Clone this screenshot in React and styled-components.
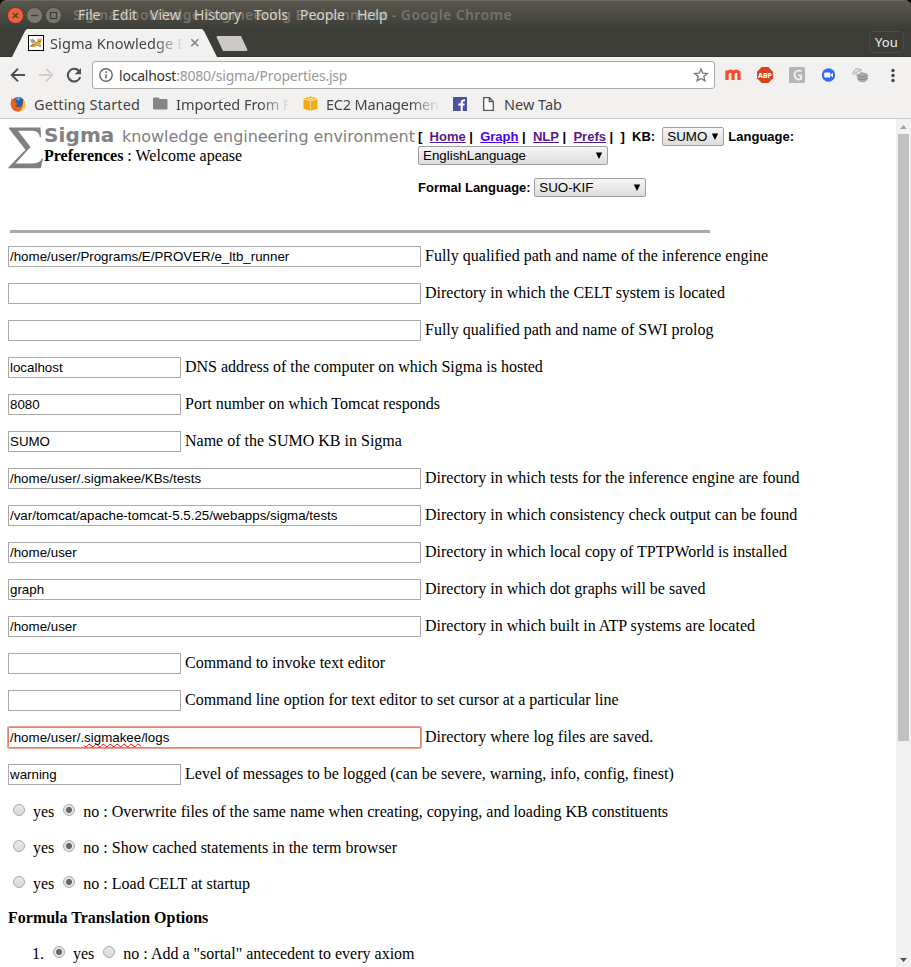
import React from "react";
import styled, { createGlobalStyle, css } from "styled-components";

const Global = createGlobalStyle`
  * { box-sizing: border-box; }
  html, body { margin: 0; background: #fff; overflow: hidden; }
  svg { display: block; flex: none; }
`;

const ui = css`font-family: "Noto Sans", "Open Sans", sans-serif;`;

const Window = styled.div`
  width: 911px; height: 967px; display: flex; flex-direction: column;
  background: #fff; overflow: hidden;
`;

/* ---------- window frame ---------- */
const Frame = styled.header`
  ${ui} flex: none; height: 57px; background: #000; 
`;
const FrameFill = styled.div`
  height: 57px; border-radius: 6px 6px 0 0; border-top: 1px solid #6b685f;
  background: linear-gradient(#5a574e 0, #3e3e39 27px, #3d3d38 100%);
  box-shadow: inset 0 -1px #33332f;
`;
const TitleBar = styled.div`
  height: 28px; display: flex; align-items: center; padding-left: 7px;
`;
const WindowButtons = styled.div`
  display: flex; gap: 2px; width: 66px; flex: none;
`;
const TitleLayers = styled.div`
  position: relative; flex: 1; height: 28px;
`;
const Title = styled.div`
  position: absolute; left: 0; top: 0; line-height: 27px; white-space: pre;
  font-size: 14px; font-weight: 600; color: #75736b; letter-spacing: ${p => p.$ls}px;
`;
const MenuBar = styled.nav`
  position: absolute; left: 5px; top: 0; display: flex; line-height: 27px;
  font-size: 14px; color: #d5d2c8;
`;
const MenuItem = styled.span`
  width: ${p => p.$w}px; flex: none; white-space: pre;
`;
const TabStrip = styled.div`
  height: 28px; display: flex; padding-left: 12px; justify-content: space-between;
`;
const TabGroup = styled.div`display: flex;`;
const Tab = styled.div`
  width: 205px; height: 28px; padding: 0 0 0 16px; gap: 6px; background: #f2f1f0; display: flex; align-items: center;
  clip-path: polygon(0 100%, 13px 2px, 15px 0, 190px 0, 192px 2px, 100% 100%);
`;
const fade = css`
  overflow: hidden; white-space: pre;
  mask-image: linear-gradient(to right, #000 calc(100% - 30px), transparent);
`;
const TabTitle = styled.span`
  width: 134px; font-size: 14.5px; line-height: 26px; color: #444; letter-spacing: ${p => p.$ls}px;
  ${fade}
`;
const NewTabButton = styled.div`
  width: 32px; height: 15px; margin: 7px 0 0 -1px; background: #ccc9c6; border-radius: 2px;
  clip-path: polygon(0 0, 25px 0, 100% 100%, 7px 100%);
`;
const Profile = styled.div`
  width: 35px; height: 22px; margin: 2px 7px 0 0; border: 1px solid #4d4c47; border-radius: 4px;
  color: #eee; font-size: 13px; line-height: 20px; text-align: center; letter-spacing: .2px;
`;

/* ---------- toolbar and bookmarks ---------- */
const Chrome = styled.div`
  ${ui} flex: none; height: 62px; background: #f2f1f0; border-bottom: 1px solid #c9c9c9;
`;
const Toolbar = styled.div`
  height: 36px; display: flex; align-items: center; padding: 0 0 0 10px;
`;
const NavButtons = styled.div`display: flex; gap: 12px; width: 82px; flex: none;`;
const AddressBar = styled.div`
  width: 623px; height: 28px; border: 1px solid #aaa; border-radius: 3px; background: #fff;
  display: flex; align-items: center; padding: 0 5px;
`;
const Url = styled.span`
  flex: 1; margin-left: 5px; font-size: 14px; line-height: 25px; color: #999; letter-spacing: ${p => p.$ls}px;
`;
const Host = styled.span`color: #333;`;
const Extensions = styled.div`
  flex: 1; display: flex; align-items: center; gap: 16px; padding-left: 10px;
`;
const MenuButton = styled.div`margin: 0 15px 0 auto;`;
const BookmarksBar = styled.div`
  height: 21px; display: flex; align-items: center; padding-left: 10px; 
`;
const Bookmark = styled.div`
  width: ${p => p.$w}px; flex: none; display: flex; align-items: center;
`;
const BookmarkLabel = styled.span`
  margin-left: ${p => p.$gap}px; width: ${p => p.$w}px; font-size: 14.5px; line-height: 22px; color: #444;
  letter-spacing: ${p => p.$ls}px; white-space: pre;
  ${p => p.$fade && fade}
`;

/* ---------- page ---------- */
const Viewport = styled.div`flex: 1; min-height: 0; display: flex;`;
const Page = styled.main`
  flex: 1; overflow: hidden; padding: 0 8px; color: #000;
  font-family: "Liberation Serif", "Times New Roman", serif; font-size: 16px; line-height: 18px;
`;
const PageHeader = styled.div`height: 111px; display: flex; padding-top: 8px;`;
const Brand = styled.div`display: flex; width: 410px; flex: none;`;
const BrandText = styled.div`white-space: nowrap;`;
const BrandName = styled.div`
  height: 20px; line-height: 16px; font-family: "DejaVu Sans", sans-serif; color: #808080;
  font-size: 16px; letter-spacing: -.05px;
`;
const BrandStrong = styled.b`
  display: inline-block; width: 78px; font-size: 20px; letter-spacing: .1px;
`;
const Controls = styled.div`
  font: bold 13px/19px "Liberation Sans", Arial, sans-serif;
`;
const ControlLine = styled.div`
  height: 19px; display: flex; align-items: center; white-space: pre; margin-bottom: ${p => p.$mb || 0}px;
`;
const Link = styled.a`color: ${p => p.$fresh ? "#40f" : "#551a8b"}; text-decoration: underline;`;
const SelectBox = styled.span`
  width: ${p => p.$w}px; height: 19px; margin: 0 4px 0 0; padding: 0 4px; border: 1px solid #a0a0a0; border-radius: 2px;
  background: linear-gradient(#f6f6f6, #dcdcdc);
  display: flex; align-items: center; justify-content: space-between;
  font: 13.333px/17px "Liberation Sans", Arial, sans-serif;
`;
const Rule = styled.div`width: 700px; height: 3px; margin: 0 0 13px 2px; background: #a9a9a9;`;
const Fields = styled.div`padding-bottom: 2px;`;
const Field = styled.div`height: 37px; display: flex; align-items: flex-start;`;
const Box = styled.div`
  width: ${p => p.$long ? 413 : 173}px; height: 21px; flex: none; padding: 0 1px;
  border: 1px solid #a9a9a9; font: 13.333px/20px "Liberation Sans", Arial, sans-serif; white-space: pre;
  ${p => p.$focus && css`border-color: #e3826a; border-radius: 1px; box-shadow: 0 0 0 1px #f0a08a;`}
`;
const Misspelled = styled.span`
  text-decoration: underline wavy #e00 1px; text-underline-offset: 1px; text-decoration-skip-ink: none;
`;
const FieldLabel = styled.span`margin-left: 4px; line-height: 20px; white-space: pre;`;
const Choice = styled.div`
  height: 36px; padding-left: ${p => p.$listed ? 24 : 5}px; display: flex; white-space: pre;
`;
const ListNumber = styled.span`width: 21px;`;
const Radio = styled.span`
  width: 12px; height: 12px; margin: ${p => p.$gap ? "1px 8px 0 9px" : "1px 8px 0 0"}; flex: none;
  border: 1px solid #aaa; border-radius: 50%;
  background: ${p => p.$on ? "radial-gradient(circle, #666 0 2.6px, #e2e2e2 3.4px)" : "linear-gradient(#e8e8e8, #dadada)"};
`;
const SectionTitle = styled.b`display: block; height: 34px; line-height: 14px;`;

const ScrollBar = styled.div`
  width: 15px; background: #f1f1f1; display: flex; flex-direction: column; align-items: center;
`;
const ScrollThumb = styled.div`width: 11px; height: 607px; background: #c1c1c1;`;
const ScrollEnd = styled.div`
  height: 15px; display: flex; align-items: center; justify-content: center; ${p => p.$last && "margin-top: auto;"}
`;

/* ---------- drawings ---------- */
const WinButton = ({ kind }) => (
  <svg width="17" height="17" viewBox="0 0 17 17">
    <circle cx="8.5" cy="8.5" r="8" fill={kind === "close" ? "#ee6237" : "#7b7870"} stroke="#3b3a34" strokeWidth=".7" />
    <g fill="none" stroke="#3b3a34" strokeWidth="1.2">
      {kind === "close" && <path d="M5.8 5.8l5.4 5.4M11.2 5.8l-5.4 5.4" />}
      {kind === "min" && <path d="M5 8.5h7" />}
      {kind === "max" && <rect x="5.5" y="5.5" width="6" height="6" />}
    </g>
  </svg>
);
const TomcatIcon = () => (
  <svg width="16" height="16" viewBox="0 0 16 16">
    <rect x=".5" y=".5" width="15" height="15" fill="#fff" stroke="#000" />
    <path d="M2 4.5l3-.5 2 1.500-1 2-2 1z" fill="#9a9a90" />
    <path d="M9 6.500L10 3l1.200 1 1.800-.2L14 3l-.3 3-1.200 2 .7 3.500-3-1.500L7 12H4L2 11l3-2.500z" fill="#d9a648" />
    <path d="M2 11.500l4-2.200M10.500 6.500h2M6 6.500l2 1M9.500 10.500l3.500 1.200" stroke="#5a5040" strokeWidth=".7" fill="none" />
  </svg>
);
const CloseX = () => (
  <svg width="10" height="10" viewBox="0 0 10 10"><path d="M1.3 1.3l7 7M8.3 1.3l-7 7" stroke="#858585" strokeWidth="1.6" /></svg>
);
const Arrow = ({ back }) => (
  <svg width="16" height="16" viewBox="0 0 16 16">
    <path d={back ? "M15 8H2M8 1.6L1.7 8L8 14.4" : "M1 8h13M8 1.6L14.3 8L8 14.4"} fill="none" stroke={back ? "#505050" : "#d0cfce"} strokeWidth="2" />
  </svg>
);
const Reload = () => (
  <svg width="16" height="16" viewBox="0 0 16 16">
    <path d="M12.9 4A6.3 6.3 0 1 0 14.2 10" fill="none" stroke="#505050" strokeWidth="2" />
    <path d="M15 1v6.3H8.7z" fill="#505050" />
  </svg>
);
const InfoIcon = () => (
  <svg width="16" height="16" viewBox="0 0 16 16">
    <circle cx="8" cy="8" r="6.2" fill="none" stroke="#666" strokeWidth="1.4" />
    <path d="M8 7.2v4.3M8 4.3v1.6" stroke="#666" strokeWidth="1.5" />
  </svg>
);
const Star = () => (
  <svg width="16" height="16" viewBox="0 0 16 16">
    <path d="M8 2l1.7 4.2 4.6.3-3.5 2.9 1.1 4.4L8 11.4l-3.9 2.4 1.1-4.4-3.5-2.9 4.6-.3z" fill="none" stroke="#777" strokeWidth="1.3" />
  </svg>
);
const MIcon = () => (
  <svg width="16" height="16" viewBox="0 0 16 16">
    <path d="M2 13V3.5M2 6Q5.500 2.500 8 5.500V13M8 6Q11 2.700 13.900 5.400V13" fill="none" stroke="#fb4b2e" strokeWidth="3.3" />
  </svg>
);
const IconText = styled.text`font: bold 7.5px "Noto Sans", sans-serif;`;
const AbpIcon = () => (
  <svg width="16" height="16" viewBox="0 0 16 16">
    <path d="M4.7 0h6.6L16 4.7v6.6L11.3 16H4.7L0 11.3V4.7z" fill="#d8421b" />
    <IconText x="8" y="10.7" textAnchor="middle" textLength="14" lengthAdjust="spacingAndGlyphs" fill="#fff">ABP</IconText>
  </svg>
);
const GIcon = () => (
  <svg width="16" height="16" viewBox="0 0 16 16">
    <rect width="16" height="16" rx="1" fill="#b5b5b5" />
    <path d="M12.300 4.200Q8.500 2.800 6.300 5.200Q4.600 8.500 6.700 11.200Q9 13.300 12 12V8.500H9.300" fill="none" stroke="#f2f2f2" strokeWidth="1.8" />
  </svg>
);
const ZoomIcon = () => (
  <svg width="15" height="15" viewBox="0 0 15 15">
    <circle cx="7.5" cy="7" r="6.7" fill="#2f6cf6" />
    <rect x="3.2" y="4.6" width="6.2" height="5" rx="1" fill="#fff" />
    <path d="M9.8 6.5L12 4.9v4.4L9.800 7.800z" fill="#fff" />
  </svg>
);
const CloudDisk = () => (
  <svg width="17" height="16" viewBox="0 0 17 16">
    <path d="M1.5 8Q0 5 3 3.5Q5 .5 8 2.5L10 3M3.500 7l2.500-3h3M2 5l3 3" stroke="#bdbdbd" strokeWidth="1.3" fill="none" />
    <path d="M4.5 8L9.500 5l5.500 1.500 1 2-.5 4.500-3.500 2.500-5-1-1.500-2z" fill="#ababab" />
    <path d="M5.5 8.6l4.500 1.200 5.500-1.500M6 11.700l5 1 4.500-1.500" stroke="#808080" strokeWidth=".9" fill="none" />
  </svg>
);
const Kebab = () => (
  <svg width="6" height="16" viewBox="0 0 6 16">
    <g fill="#454545"><circle cx="3" cy="3.5" r="1.7" /><circle cx="3" cy="8.5" r="1.7" /><circle cx="3" cy="13.5" r="1.7" /></g>
  </svg>
);
const Firefox = () => (
  <svg width="16" height="16" viewBox="0 0 16 16">
    <circle cx="8" cy="8.3" r="7.2" fill="#e2481d" />
    <circle cx="8.6" cy="6" r="5" fill="#2363ad" />
    <path d="M5 2.500Q8 0 11 2L8.500 5z" fill="#4aa3df" />
    <path d="M.9 5l.9-2.800L3.500 4l2.800.6L5 6.500l2.500 1Q7 9.800 4.800 9.500 7 12.500 11 10.800 14 8 12.500 3.500 15.800 7 15 10.500 12.500 15.500 7.500 15.300 2 14.500.8 9z" fill="#e8641c" />
    <path d="M13 3.500q3.800 4 1.400 8.700-2 2.800-5 3.200 4.600-4 3.600-11.900z" fill="#fbc534" />
  </svg>
);
const Folder = () => (
  <svg width="15" height="13" viewBox="0 0 15 13"><path d="M1 .5h4.500l1.500 1.500h6.500q1 0 1 1V11.500q0 1-1 1H1q-1 0-1-1v-10q0-1 1-1z" fill="#858585" /></svg>
);
const Cube = () => (
  <svg width="15" height="15" viewBox="0 0 15 15">
    <path d="M.5 3.300L7.200 5.300v9.500L.5 12.800zM14.500 3.300L7.800 5.300v9.500l6.700-2z" fill="#f5ab14" />
    <path d="M.7 2.500L7.500.3l6.800 2.200L7.500 4.700z" fill="#fbb726" /><path d="M4.500 3.800l6-2.300M10.500 3.800l-6-2.300" stroke="#fce0a0" strokeWidth=".8" />
  </svg>
);
const Facebook = () => (
  <svg width="14" height="14" viewBox="0 0 14 14">
    <rect width="14" height="14" rx=".6" fill="#4752a0" />
    <path d="M8.700 14V5.300Q8.700 3.300 12 3.300M5.300 7.500h6.300" stroke="#fff" strokeWidth="2.1" fill="none" />
  </svg>
);
const PageIcon = () => (
  <svg width="11" height="14" viewBox="0 0 11 14"><path d="M.7.7h5.800l3.800 3.800v8.800H.7zM6.300.7v4h4" fill="#fff" stroke="#555" strokeWidth="1.3" /></svg>
);
const SigmaLogo = () => (
  <svg width="36" height="42" viewBox="0 0 36 42">
    <path d="M1 .5H32.500L33 10H31.800Q31 4 25 3.800H10L22.500 20L7.500 36.500H24Q32 36.500 33.800 31.500H35L32.800 41.300H.5V40.200L17.500 22.800L1 1.800z" fill="#808080" />
  </svg>
);
const Caret = () => (
  <svg width="8" height="8" viewBox="0 0 8 8"><path d="M.8 .5h6.400L4 7z" fill="#000" /></svg>
);
const ScrollArrow = ({ down }) => (
  <svg width="7" height="4" viewBox="0 0 7 4"><path d={down ? "M0 0h7L3.500 4z" : "M0 4h7L3.500 0z"} fill={down ? "#505050" : "#a3a3a3"} /></svg>
);

const Select = ({ w, children }) => <SelectBox $w={w}>{children}<Caret /></SelectBox>;

const menus = [["File", 34], ["Edit", 38], ["View", 44], ["History", 60], ["Tools", 46], ["People", 57], ["Help", 40]];
const fields = [
  ["/home/user/Programs/E/PROVER/e_ltb_runner", "Fully qualified path and name of the inference engine", true],
  ["", "Directory in which the CELT system is located", true],
  ["", "Fully qualified path and name of SWI prolog", true],
  ["localhost", "DNS address of the computer on which Sigma is hosted"],
  ["8080", "Port number on which Tomcat responds"],
  ["SUMO", "Name of the SUMO KB in Sigma"],
  ["/home/user/.sigmakee/KBs/tests", "Directory in which tests for the inference engine are found", true],
  ["/var/tomcat/apache-tomcat-5.5.25/webapps/sigma/tests", "Directory in which consistency check output can be found", true],
  ["/home/user", "Directory in which local copy of TPTPWorld is installed", true],
  ["graph", "Directory in which dot graphs will be saved", true],
  ["/home/user", "Directory in which built in ATP systems are located", true],
  ["", "Command to invoke text editor"],
  ["", "Command line option for text editor to set cursor at a particular line"],
  [<>/home/user/.<Misspelled>sigmakee</Misspelled>/logs</>, "Directory where log files are saved.", true, true],
  ["warning", "Level of messages to be logged (can be severe, warning, info, config, finest)"],
];
const choices = [
  "Overwrite files of the same name when creating, copying, and loading KB constituents",
  "Show cached statements in the term browser",
  "Load CELT at startup",
];

const YesNo = ({ yes, number, children }) => (
  <Choice $listed={!!number}>
    {number && <ListNumber>{number}</ListNumber>}
    <Radio $on={yes} />yes<Radio $on={!yes} $gap />no : {children}
  </Choice>
);

export default function App() {
  return (
    <Window>
      <Global />
      <Frame>
        <FrameFill>
          <TitleBar>
            <WindowButtons><WinButton kind="close" /><WinButton kind="min" /><WinButton kind="max" /></WindowButtons>
            <TitleLayers>
              <Title $ls={0.4}>Sigma Knowledge Engineering Environment - Google Chrome</Title>
              <MenuBar>{menus.map(([m, w]) => <MenuItem key={m} $w={w}>{m}</MenuItem>)}</MenuBar>
            </TitleLayers>
          </TitleBar>
          <TabStrip>
            <TabGroup>
              <Tab><TomcatIcon /><TabTitle $ls={0.1}>Sigma Knowledge Engineering</TabTitle><CloseX /></Tab>
              <NewTabButton />
            </TabGroup>
            <Profile>You</Profile>
          </TabStrip>
        </FrameFill>
      </Frame>
      <Chrome>
        <Toolbar>
          <NavButtons><Arrow back /><Arrow /><Reload /></NavButtons>
          <AddressBar>
            <InfoIcon /><Url $ls={-0.22}><Host>localhost</Host>:8080/sigma/Properties.jsp</Url><Star />
          </AddressBar>
          <Extensions>
            <MIcon /><AbpIcon /><GIcon /><ZoomIcon /><CloudDisk />
            <MenuButton><Kebab /></MenuButton>
          </Extensions>
        </Toolbar>
        <BookmarksBar>
          <Bookmark $w={143}><Firefox /><BookmarkLabel $gap={8} $ls={0.12}>Getting Started</BookmarkLabel></Bookmark>
          <Bookmark $w={150}><Folder /><BookmarkLabel $gap={8} $w={114} $fade $ls={-0.04}>Imported From Firefox</BookmarkLabel></Bookmark>
          <Bookmark $w={150}><Cube /><BookmarkLabel $gap={8} $w={114} $fade $ls={-0.2}>EC2 Management Console</BookmarkLabel></Bookmark>
          <Bookmark $w={30}><Facebook /></Bookmark>
          <Bookmark $w={90}><PageIcon /><BookmarkLabel $gap={10} $ls={0}>New Tab</BookmarkLabel></Bookmark>
        </BookmarksBar>
      </Chrome>
      <Viewport>
        <Page>
          <PageHeader>
            <Brand>
              <SigmaLogo />
              <BrandText>
                <BrandName><BrandStrong>Sigma</BrandStrong>knowledge engineering environment</BrandName>
                <b>Preferences</b> : Welcome apease
              </BrandText>
            </Brand>
            <Controls>
              <ControlLine>
                {"[  "}<Link>Home</Link>{" |  "}<Link $fresh>Graph</Link>{" |  "}<Link>NLP</Link>{" |  "}<Link>Prefs</Link>{" |  ]  KB:  "}
                <Select w={62}>SUMO</Select>Language:
              </ControlLine>
              <ControlLine $mb={13}><Select w={190}>EnglishLanguage</Select></ControlLine>
              <ControlLine>{"Formal Language: "}<Select w={112}>SUO-KIF</Select></ControlLine>
            </Controls>
          </PageHeader>
          <Rule />
          <Fields>
            {fields.map(([value, label, long, focus], i) => (
              <Field key={i}><Box $long={long} $focus={focus}>{value}</Box><FieldLabel>{label}</FieldLabel></Field>
            ))}
          </Fields>
          {choices.map(c => <YesNo key={c}>{c}</YesNo>)}
          <SectionTitle>Formula Translation Options</SectionTitle>
          <YesNo yes number="1.">Add a "sortal" antecedent to every axiom</YesNo>
        </Page>
        <ScrollBar>
          <ScrollEnd><ScrollArrow /></ScrollEnd>
          <ScrollThumb />
          <ScrollEnd $last><ScrollArrow down /></ScrollEnd>
        </ScrollBar>
      </Viewport>
    </Window>
  );
}
